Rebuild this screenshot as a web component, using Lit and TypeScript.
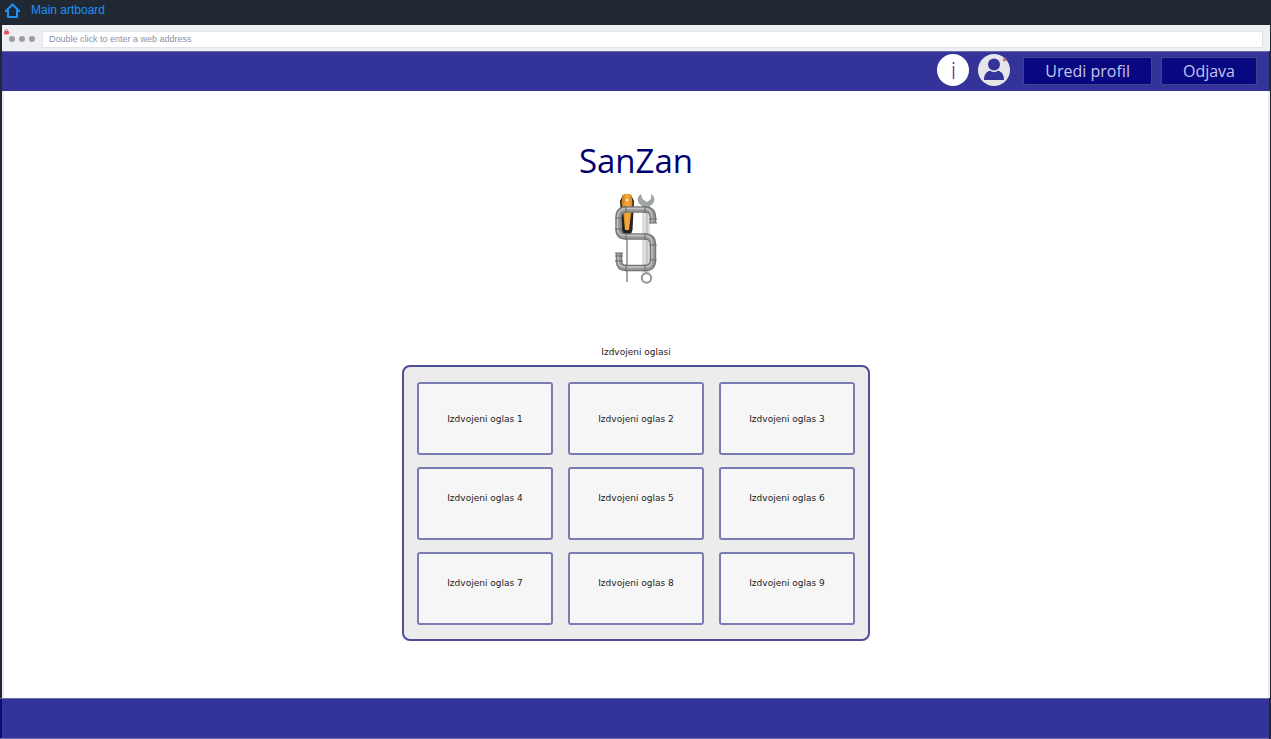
import { LitElement, html, css } from "lit";
import { customElement } from "lit/decorators.js";

@customElement("pipe-logo")
class PipeLogo extends LitElement {
  static styles = css`
    :host { display: block; }
    svg { display: block; }
  `;

  render() {
    return html`
      <svg width="44" height="92" viewBox="0 0 44 92" role="img" aria-label="SanZan logo">
        <defs>
          <linearGradient id="handle" x1="0" x2="1">
            <stop offset="0" stop-color="#c87a18" />
            <stop offset=".5" stop-color="#f7ad3c" />
            <stop offset="1" stop-color="#d98a20" />
          </linearGradient>
        </defs>
        <path d="M28 14V80H36V14Z" fill="#dcddde" />
        <path d="M33 14V80" stroke="#c6c7c8" stroke-width="2" />
        <path d="M27 1C22 4 23 10 28 13V17H36V13C41.500 10 42 4 37 1L37 6L33 9L28.500 6Z" fill="#a2a5a7" />
        <path d="M13 38V89" stroke="#8b8886" stroke-width="1.500" />
        <path d="M9 2C11 .5 15 .5 17 2L20 8L18.500 37L17 41H9L8 37L6 8Z" fill="#252321" />
        <path d="M8.500 2C11 .3 15 .3 17.500 2L18.500 10L17 22L15 37H11L9.500 22L7.500 10Z" fill="url(#handle)" />
        <circle cx="13" cy="7" r="1.200" fill="#fff3d8" />
        <g fill="none" stroke-linejoin="round">
          <path d="M39 30V25Q39 16.500 31 16.500H12Q4.500 16.500 4.500 25V36Q4.500 43.500 12 43.500H31Q39 43.500 39 52V67Q39 75 31 75H12Q5 75 5 68V60" stroke="#767676" stroke-width="6.500" />
          <path d="M39 30V25Q39 16.500 31 16.500H12Q4.500 16.500 4.500 25V36Q4.500 43.500 12 43.500H31Q39 43.500 39 52V67Q39 75 31 75H12Q5 75 5 68V60" stroke="#999" stroke-width="4" />
          <path d="M38 29V25Q38 15.500 31 15.500H12Q3.500 15.500 3.500 25V36Q3.500 42.500 12 42.500H31Q38 42.500 38 52V67Q38 74 31 74H12Q4 74 4 68V60" stroke="#c4c4c4" stroke-width="1.300" />
        </g>
        <path d="M1 25H8M1 36H8M12 13V20M31 13V20M35 26H43M35 30H43M12 40V47M31 40V47M35.500 52H42.500M35.500 67H42.500M31 71.500V78.500M12 71.500V78.500M1 60H9M1 63H9M1 68H9" stroke="#666" />
        <circle cx="32.500" cy="85" r="4.700" fill="#fff" stroke="#929496" stroke-width="2" />
      </svg>
    `;
  }
}

@customElement("app-root")
class AppRoot extends LitElement {
  static styles = css`
    :host {
      display: flex;
      flex-direction: column;
      min-height: 100vh;
      box-sizing: border-box;
      background: #202834;
      font-family: "Open Sans", "Noto Sans", sans-serif;
    }
    * { box-sizing: border-box; }
    .topbar {
      display: flex;
      align-items: center;
      height: 25px;
      padding: 0 5px 5px;
    }
    .crumb {
      display: flex;
      align-items: center;
      gap: 11px;
      color: #1e90f5;
      font: 12px/16px "Liberation Sans", sans-serif;
      text-decoration: none;
    }
    .crumb svg { display: block; }
    .board {
      display: flex;
      flex-direction: column;
      flex: 1;
      margin: 0 1px 0 2px;
    }
    .chrome {
      position: relative;
      display: flex;
      align-items: center;
      gap: 7px;
      height: 26px;
      padding: 2px 7px 0;
      background: #eeeff3;
    }
    .dots { display: flex; gap: 4px; }
    .dot {
      width: 6px;
      height: 6px;
      border-radius: 50%;
      background: #9d9d9d;
    }
    .lock {
      position: absolute;
      left: 2px;
      top: 3px;
    }
    .address {
      flex: 1;
      min-width: 0;
      height: 17px;
      padding: 0 6px;
      border: 1px solid #e2e3e7;
      border-radius: 0;
      background: #fff;
      color: #8085a0;
      font: 9px/15px "Liberation Sans", sans-serif;
      outline: none;
    }
    .address::placeholder { color: #8d91a8; opacity: 1; }
    .header {
      display: flex;
      align-items: center;
      justify-content: flex-end;
      height: 40px;
      padding: 0 12px 2px 0;
      margin-right: 1px;
      border-top: 1px solid #6c6ca8;
      background: #333399;
    }
    .icons {
      display: flex;
      gap: 9px;
      padding-bottom: 2px;
      margin-right: 13px;
    }
    .icon {
      width: 32px;
      height: 32px;
      padding: 0;
      border: 0;
      border-radius: 50%;
      background: none;
    }
    .icon svg { display: block; }
    .info {
      background: #fff;
      color: #59229a;
      font: 24px/32px "Open Sans", sans-serif;
      font-weight: 300;
    }
    .actions {
      display: flex;
      gap: 9px;
    }
    .action {
      height: 28px;
      padding: 0 21px;
      border: 1px solid #43438c;
      border-radius: 2px;
      background: #080880;
      color: #c4c4ee;
      font: 16px/24px "Open Sans", sans-serif;
    }
    .main {
      display: flex;
      flex-direction: column;
      align-items: center;
      flex: 1;
      padding: 46px 16px 57px;
      border: solid #e9ebf0;
      border-width: 0 2px;
      background: #fff;
    }
    .title {
      margin: 0;
      color: #000070;
      font-size: 33px;
      font-weight: 400;
      line-height: 48px;
    }
    .logo { margin-top: 8px; }
    .caption {
      margin: 60px 0 6px;
      color: #222;
      font: 400 9px/14px "DejaVu Sans", sans-serif;
    }
    .panel {
      display: grid;
      grid-template-columns: repeat(3, 136px);
      grid-auto-rows: 73px;
      gap: 12px 15px;
      margin: 0;
      padding: 15px 13px 14px;
      border: 2px solid #4d4d99;
      border-radius: 8px;
      background: #ececec;
      list-style: none;
    }
    .card {
      display: flex;
      align-items: center;
      justify-content: center;
      border: 2px solid #7b7bb3;
      border-radius: 3px;
      background: #f6f6f6;
      color: #222;
      font: 9px/14px "DejaVu Sans", sans-serif;
    }
    .card.raised { padding-bottom: 12px; }
    .footer {
      height: 41px;
      margin-right: 2px;
      border: solid #6c6ca8;
      border-width: 1px 0;
      background: linear-gradient(90deg, #0c0c74 2px, #333399 2px);
    }
  `;

  private ads = [1, 2, 3, 4, 5, 6, 7, 8, 9];

  render() {
    return html`
      <nav class="topbar">
        <a class="crumb" href="#">
          <svg width="15" height="15" viewBox="0 0 15 15" fill="none" stroke="#1e90f5" stroke-width="2">
            <path d="M.8 8H3V14H12V8H14.200L7.500 1.500Z" />
          </svg>
          Main artboard
        </a>
      </nav>
      <div class="board">
        <div class="chrome">
          <svg class="lock" width="5" height="7" viewBox="0 0 5 7" aria-hidden="true">
            <path d="M1.500 3V2Q2.500 .5 3.500 2V3" fill="none" stroke="#e0697c" />
            <rect y="3" width="5" height="3.500" rx="1" fill="#d9566c" />
          </svg>
          <div class="dots">
            <span class="dot"></span><span class="dot"></span><span class="dot"></span>
          </div>
          <input class="address" type="text" aria-label="Web address" placeholder="Double click to enter a web address" />
        </div>
        <header class="header">
          <div class="icons">
            <button class="icon info" aria-label="Info">i</button>
            <button class="icon" aria-label="Profil">
              <svg width="32" height="32" viewBox="0 0 32 32">
                <circle cx="16" cy="16" r="16" fill="#e6e6ea" />
                <path d="M6 26C6 20.500 8.500 17.500 12 16.800Q16 19.500 20 16.800C23.500 17.500 26 20.500 26 26Z" fill="#333399" />
                <circle cx="16" cy="10.500" r="6" fill="#333399" />
                <path d="M25 6.500V4.500Q26.500 2.500 28 4.500V6.500L26.500 8Z" fill="#e0697c" />
              </svg>
            </button>
          </div>
          <div class="actions">
            <button class="action">Uredi profil</button>
            <button class="action">Odjava</button>
          </div>
        </header>
        <main class="main">
          <h1 class="title">SanZan</h1>
          <pipe-logo class="logo"></pipe-logo>
          <h2 class="caption">Izdvojeni oglasi</h2>
          <ul class="panel">
            ${this.ads.map(
              (n) => html`<li class="card ${n > 3 ? "raised" : ""}">Izdvojeni oglas ${n}</li>`
            )}
          </ul>
        </main>
      </div>
      <footer class="footer"></footer>
    `;
  }
}
